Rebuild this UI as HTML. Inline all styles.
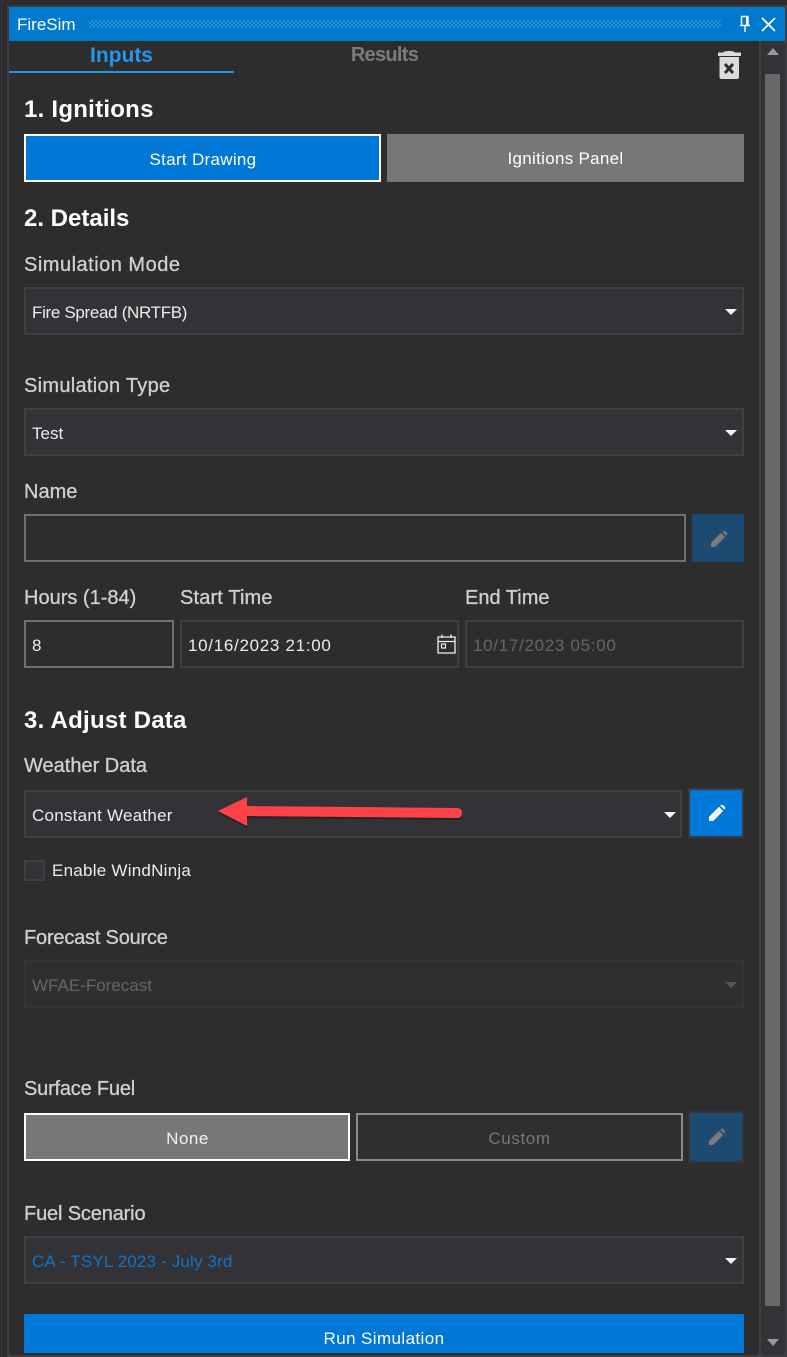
<!DOCTYPE html>
<html><head><meta charset="utf-8">
<style>
html,body{margin:0;padding:0;background:#2d2d30}
#r{position:relative;width:787px;height:1357px;overflow:hidden;background:#2d2d30;font-family:"Liberation Sans","Noto Sans CJK JP",sans-serif;font-size:17px;color:#ececec}
#r div{position:absolute;box-sizing:border-box;white-space:nowrap}
.t{line-height:24px;height:24px}
.h{font-size:24px;font-weight:bold;color:#fff;line-height:28px;height:28px;letter-spacing:.25px}
.l{font-size:20px;color:#d0d0d0;line-height:24px;height:24px;-webkit-text-stroke:.3px #d0d0d0}
.c{background:#333337;border:2px solid #3f3f44}
.in{border:2px solid #3f3f44;background:#2d2d2d}
.a{width:0;height:0;border-left:6.500px solid transparent;border-right:6.500px solid transparent;border-top:6px solid #f4f4f4}
svg{position:absolute}
</style></head>
<body><div id="r">
<div style="left:1px;top:0;width:1px;height:1357px;background:#38383c"></div>
<div style="left:7px;top:5px;width:780px;height:1352px;background:#3c3c42"></div>
<div style="left:9px;top:41px;width:776px;height:1314px;background:#2d2d2d"></div>
<div style="left:9px;top:7px;width:776px;height:34px;background:#007acc"></div>
<div style="left:17px;top:13px;font-size:17px;line-height:24px;color:#fff">FireSim</div>
<div style="left:89px;top:20px;width:632px;height:8px;background:repeating-conic-gradient(#2a90d6 0 25%,transparent 0 50%) 0 0/4px 4px"></div>
<svg style="left:738px;top:15px" width="14" height="18" viewBox="0 0 14 18"><path d="M3.500 1.500H10V10.500H3.500ZM2 10.500H12M7 11V17" stroke="#fff" stroke-width="1.400" fill="none"/><path d="M9 2V10" stroke="#fff" stroke-width="2" fill="none"/></svg>
<svg style="left:761px;top:17px" width="15" height="15" viewBox="0 0 15 15"><path d="M1 1L14 14M14 1L1 14" stroke="#fff" stroke-width="1.800" fill="none"/></svg>

<div style="left:9px;top:42px;width:225px;height:28px;color:#2196eb;font-size:21px;font-weight:bold;text-align:center;line-height:28px">Inputs</div>
<div style="left:9px;top:71px;width:225px;height:2px;background:#2196eb"></div>
<div style="left:272px;top:41px;width:225px;height:28px;color:#7a7a7a;font-size:20px;font-weight:bold;text-align:center;line-height:28px;letter-spacing:-.7px">Results</div>

<svg style="left:717px;top:50px" width="24" height="30" viewBox="0 0 24 30"><path d="M1 6V2.500H6Q7 1 12 1T18 2.500H24V6Z" fill="#dcdcdc"/><path d="M2.500 7H22V27Q22 29 20 29H4.500Q2.500 29 2.500 27Z" fill="#dcdcdc"/><path d="M8 14L16 23M16 14L8 23" stroke="#2d2d2d" stroke-width="3" fill="none"/></svg>

<div style="left:759px;top:41px;width:26px;height:1314px;background:#333337;border-left:2px solid #3f3f46"></div>
<div style="left:765px;top:74px;width:15px;height:1232px;background:#686868"></div>
<div style="left:767px;top:48px;width:0;height:0;border-left:6px solid transparent;border-right:6px solid transparent;border-bottom:7px solid #999"></div>
<div style="left:767px;top:1339px;width:0;height:0;border-left:6px solid transparent;border-right:6px solid transparent;border-top:7px solid #999"></div>

<div class="h" style="left:24px;top:96px">1. Ignitions</div>
<div style="left:24px;top:134px;width:357px;height:48px;background:#0078d7;border:2px solid #fff;text-align:center;line-height:48px;color:#fff;letter-spacing:.3px;padding-left:1px">Start Drawing</div>
<div style="left:387px;top:134px;width:357px;height:48px;background:#777;text-align:center;line-height:50px;color:#fff;letter-spacing:.3px">Ignitions Panel</div>

<div class="h" style="left:24px;top:205px;letter-spacing:0">2. Details</div>
<div class="l" style="left:24px;top:253px;letter-spacing:.5px">Simulation Mode</div>
<div class="c" style="left:24px;top:287px;width:720px;height:48px"></div>
<div class="t" style="left:32px;top:301px;letter-spacing:-.32px">Fire Spread (NRTFB)</div>
<div class="a" style="left:724.500px;top:309px"></div>

<div class="l" style="left:24px;top:374px;letter-spacing:.3px">Simulation Type</div>
<div class="c" style="left:24px;top:408px;width:720px;height:48px"></div>
<div class="t" style="left:32px;top:422px">Test</div>
<div class="a" style="left:724.500px;top:430px"></div>

<div class="l" style="left:24px;top:480px">Name</div>
<div style="left:24px;top:514px;width:662px;height:48px;border:2px solid #707070;background:#2d2d2d"></div>
<div style="left:692px;top:514px;width:52px;height:48px;background:#1c4a70"></div>
<svg style="left:710px;top:530px" width="18" height="18" viewBox="0 0 18 18"><path d="M1 17V12.800L11 2.800L15.200 7L5.200 17Z M12.200 1.600L13 1Q14 0.500 15 1L16.800 2.800Q17.500 3.800 17 4.800L16.400 5.800Z" fill="#7a7a7a"/></svg>

<div class="l" style="left:24px;top:586px">Hours (1-84)</div>
<div class="l" style="left:180px;top:586px;letter-spacing:.15px">Start Time</div>
<div class="l" style="left:465px;top:586px">End Time</div>
<div style="left:24px;top:620px;width:150px;height:48px;border:2px solid #707070;background:#2d2d2d"></div>
<div class="t" style="left:32px;top:634px">8</div>
<div class="in" style="left:180px;top:620px;width:279px;height:48px"></div>
<div class="t" style="left:188px;top:634px;letter-spacing:.7px">10/16/2023 21:00</div>
<svg style="left:437px;top:633px" width="19" height="21" viewBox="0 0 19 21"><path d="M1 4H18V20H1ZM1 8.500H18M5 1.500V5M14 1.500V5" stroke="#f0f0f0" stroke-width="1.300" fill="none"/><rect x="4.500" y="11" width="4" height="4" stroke="#f0f0f0" stroke-width="1.200" fill="none"/></svg>
<div class="in" style="left:465px;top:620px;width:279px;height:48px"></div>
<div class="t" style="left:473px;top:634px;color:#666;letter-spacing:.7px">10/17/2023 05:00</div>

<div class="h" style="left:24px;top:707px">3. Adjust Data</div>
<div class="l" style="left:24px;top:754px">Weather Data</div>
<div class="c" style="left:24px;top:790px;width:658px;height:48px"></div>
<div class="t" style="left:32px;top:804px;letter-spacing:.25px">Constant Weather</div>
<div class="a" style="left:663.500px;top:812px"></div>
<div style="left:688px;top:788px;width:56px;height:50px;background:#0078d7;border:2px solid #3a3a3e"></div>
<svg style="left:708px;top:804px" width="18" height="18" viewBox="0 0 18 18"><path d="M1 17V12.800L11 2.800L15.200 7L5.200 17Z M12.200 1.600L13 1Q14 0.500 15 1L16.800 2.800Q17.500 3.800 17 4.800L16.400 5.800Z" fill="#f4f4f4"/></svg>
<svg style="left:210px;top:790px" width="260" height="42" viewBox="0 0 260 42"><path d="M8 21L37 7V16L247 18Q252 18 252 23Q252 28 247 28L37 26V36Z" fill="#000" opacity=".28" transform="translate(0 2)"/><path d="M8 21L37 7V16L247 18Q252 18 252 23Q252 28 247 28L37 26V36Z" fill="#ff4248"/></svg>
<div style="left:24px;top:860px;width:21px;height:21px;background:#333337;border:2px solid #3f3f44"></div>
<div class="t" style="left:52px;top:859px;letter-spacing:.25px">Enable WindNinja</div>

<div class="l" style="left:24px;top:926px;letter-spacing:-.2px">Forecast Source</div>
<div style="left:24px;top:960px;width:720px;height:48px;border:2px solid #343436;background:#2f2f31"></div>
<div class="t" style="left:32px;top:974px;color:#666">WFAE-Forecast</div>
<div class="a" style="left:724.500px;top:982px;border-top-color:#555"></div>

<div class="l" style="left:24px;top:1077px;letter-spacing:-.2px">Surface Fuel</div>
<div style="left:24px;top:1113px;width:326px;height:48px;background:#777;border:2px solid #fff;text-align:center;line-height:47px;color:#f0f0f0;letter-spacing:.5px;padding-left:1px">None</div>
<div style="left:356px;top:1113px;width:327px;height:48px;background:#2f2f2f;border:2px solid #8a8a8a;text-align:center;line-height:47px;color:#777;letter-spacing:.6px">Custom</div>
<div style="left:688px;top:1111px;width:56px;height:52px;background:#1c4a70;border:2px solid #333338"></div>
<svg style="left:708px;top:1128px" width="18" height="18" viewBox="0 0 18 18"><path d="M1 17V12.800L11 2.800L15.200 7L5.200 17Z M12.200 1.600L13 1Q14 0.500 15 1L16.800 2.800Q17.500 3.800 17 4.800L16.400 5.800Z" fill="#7a7a7a"/></svg>

<div class="l" style="left:24px;top:1202px;letter-spacing:-.15px">Fuel Scenario</div>
<div class="c" style="left:24px;top:1236px;width:720px;height:48px"></div>
<div class="t" style="left:32px;top:1250px;color:#0f74c8;letter-spacing:.16px">CA - TSYL 2023 - July 3rd</div>
<div class="a" style="left:724.500px;top:1258px"></div>

<div style="left:24px;top:1314px;width:720px;height:39px;background:#0078d7;text-align:center;line-height:50px;color:#fff;overflow:hidden;letter-spacing:.4px">Run Simulation</div>
</div></body></html>
